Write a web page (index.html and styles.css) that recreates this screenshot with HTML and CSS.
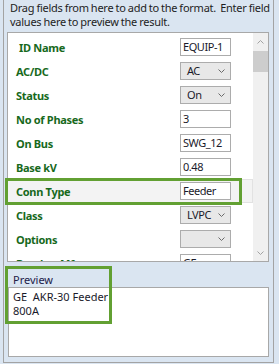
FILE: index.html
```html
<!DOCTYPE html>
<html>
<head>
<meta charset="utf-8" />
<meta name="viewport" content="width=device-width,initial-scale=1.0"/>
<link rel="stylesheet" href="styles.css">
</head>
<body>
<div class="frame">
<p class="hint">Drag fields from here to add to the format.&nbsp; Enter field values here to preview the result.</p>

<div class="fields">
<div class="list">
<div class="row first"><span class="lbl">ID Name</span><span class="txt">EQUIP-1</span></div>
<div class="row"><span class="lbl">AC/DC</span><span class="combo">AC<svg viewBox="0 0 7 4"><polyline points="0.5,0.5 3.5,3.5 6.5,0.5"/></svg></span></div>
<div class="row"><span class="lbl">Status</span><span class="combo">On<svg viewBox="0 0 7 4"><polyline points="0.5,0.5 3.5,3.5 6.5,0.5"/></svg></span></div>
<div class="row"><span class="lbl">No of Phases</span><span class="txt">3</span></div>
<div class="row"><span class="lbl">On Bus</span><span class="txt">SWG_12</span></div>
<div class="row"><span class="lbl">Base kV</span><span class="txt">0.48</span></div>
<div class="row sel"><span class="lbl">Conn Type</span><span class="txt">Feeder</span></div>
<div class="row"><span class="lbl">Class</span><span class="combo">LVPC<svg viewBox="0 0 7 4"><polyline points="0.5,0.5 3.5,3.5 6.5,0.5"/></svg></span></div>
<div class="row"><span class="lbl">Options</span><span class="combo"><svg viewBox="0 0 7 4"><polyline points="0.5,0.5 3.5,3.5 6.5,0.5"/></svg></span></div>
<div class="row"><span class="lbl">Breaker Mfr</span><span class="txt">GE</span></div>
</div>
<div class="scroll">
<div class="arrow"><svg viewBox="0 0 7 4"><polyline points="0.5,3.5 3.5,0.5 6.5,3.5"/></svg></div>
<div class="thumb"></div>
<div class="track"></div>
<div class="arrow"><svg viewBox="0 0 7 4"><polyline points="0.5,0.5 3.5,3.5 6.5,0.5"/></svg></div>
</div>
</div>

<div class="preview">
<div class="preview-lbl">Preview</div>
<div class="preview-box">GE&nbsp; AKR-30 Feeder<br>800A</div>
</div>

<!-- green call-outs drawn over the dialog -->
<div class="mark mark-conn"></div>
<div class="mark mark-preview"></div>
</div>
</body>
</html>
```

FILE: styles.css
```css
body {
     margin:0;
     background:#dae5f1;
     font-family:"Noto Sans", "Open Sans", sans-serif;
     font-size:11px;
     color:#1e1e1e;
}

.frame {
     position:relative;
     margin-left:3px;
     width:269px;
     height:362px;
     border-left:1px solid #a3a3a3;
     border-right:1px solid #a3a3a3;
     border-bottom:1px solid #a3a3a3;
}

.hint {
     margin:0;
     padding:1px 0 0 6px;
     height:28px;
     line-height:14px;
     letter-spacing:-0.25px;
     word-spacing:-0.5px;
}

.fields {
     display:flex;
     margin:3px 0 0 3px;
     width:260px;
     height:228px;
     background:#ffffff;
     border:1px solid #a8a8a8;
}

.list {
     flex:1;
     overflow:hidden;
     padding-top:2px;
}

.row {
     display:flex;
     align-items:center;
     justify-content:space-between;
     height:24px;
     padding:0 21px 0 8px;
     box-sizing:border-box;
     border:1px solid transparent;
     border-left:none;
}
.row.first .lbl {
     padding-left:3px;
}
.row.sel {
     background:#f3f3f3;
     border-color:#e2e2e2;
}

.lbl {
     font-weight:bold;
     color:#17691c;
     letter-spacing:-0.3px;
}

.txt, .combo {
     box-sizing:border-box;
     width:51px;
     height:18px;
     line-height:16px;
     padding:0 2px;
     border:1px solid #acacac;
     background:#ffffff;
     color:#1a1a2a;
     overflow:hidden;
     white-space:nowrap;
     letter-spacing:-0.45px;
}
.combo {
     display:flex;
     align-items:center;
     justify-content:space-between;
     padding:0 5px 0 6px;
     background:#e8e8e8;
}
.combo svg {
     width:7px;
     height:4px;
     margin-left:auto;
     fill:none;
     stroke:#6a6a6a;
     stroke-width:1;
}

.scroll {
     display:flex;
     flex-direction:column;
     width:15px;
     background:#f0f0f0;
}
.scroll .arrow {
     height:17px;
     display:flex;
     align-items:center;
     justify-content:center;
}
.scroll .arrow svg {
     width:7px;
     height:4px;
     fill:none;
     stroke:#a3a3a3;
     stroke-width:1;
}
.scroll .thumb {
     height:21px;
     margin:1px 0;
     background:#cdcdcd;
}
.scroll .track {
     flex:1;
}

.preview {
     margin:11px 0 0 4px;
}
.preview-lbl {
     padding-left:5px;
     height:14px;
     line-height:14px;
     color:#22204a;
}
.preview-box {
     box-sizing:border-box;
     width:261px;
     height:70px;
     padding:2px 4px;
     line-height:14px;
     background:#ffffff;
     border:1px solid #a8a8a8;
     color:#1a1a2a;
}

.mark {
     position:absolute;
     border:3px solid #62a032;
}
.mark-conn {
     left:1px;
     top:178px;
     width:231px;
     height:21px;
}
.mark-preview {
     left:1px;
     top:266px;
     width:101px;
     height:52px;
}
```
